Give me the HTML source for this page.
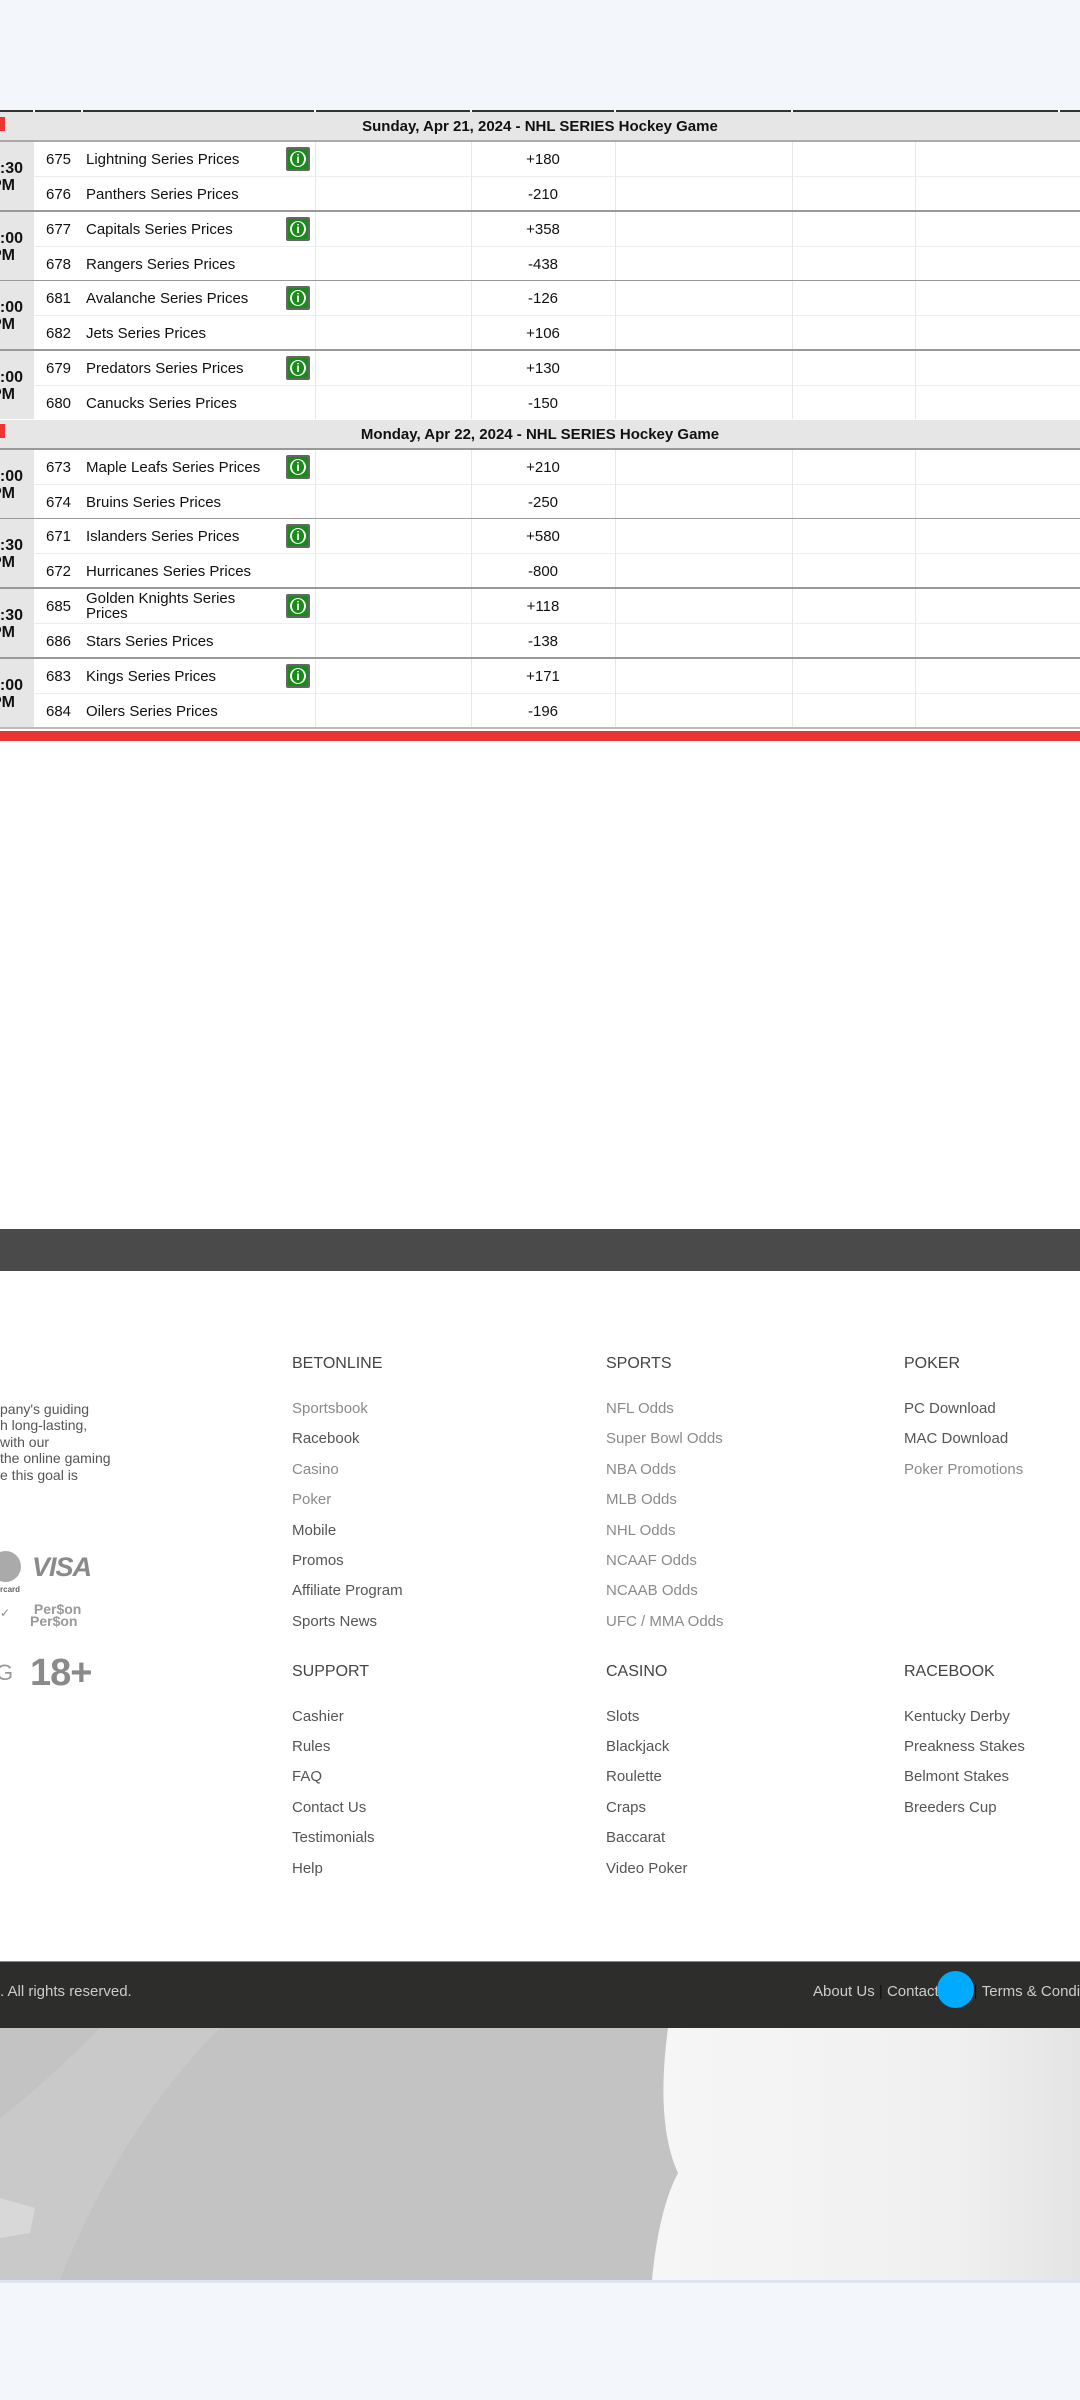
<!DOCTYPE html>
<html><head><meta charset="utf-8"><style>
*{margin:0;padding:0;box-sizing:border-box}
body{width:1080px;height:2400px;position:relative;overflow:hidden;background:#fff;font-family:"Liberation Sans",Arial,sans-serif;color:#111}
.a{position:absolute}
.hd{position:absolute;left:0;width:1080px;height:30px;background:#e6e6e6;border-bottom:2px solid #aaa;font-weight:bold;font-size:15px;text-align:center;line-height:29px}
.pl{position:absolute;left:0;width:5px;height:14px;background:#e33}
.g{position:absolute;left:0;width:1080px;height:70px;border-bottom:2px solid #999;background:#fff}
.t{position:absolute;left:0;top:0;width:34px;height:68px;background:#e6e6e6;overflow:hidden}
.t div{position:absolute;left:-9px;font-weight:bold;font-size:16px;line-height:16px;white-space:nowrap}
.r{position:absolute;left:34px;width:1046px;height:34px;font-size:15px;line-height:17px}
.r.b{border-top:1px solid #eee}
.r .n{position:absolute;left:12px;top:9px}
.r .m{position:absolute;left:52px;top:9px}
.r .o{position:absolute;left:437px;width:144px;top:9px;text-align:center}
.v{position:absolute;top:0;width:1px;height:68px;background:#e8e8e8}
.i{position:absolute;left:252px;top:5px;width:24px;height:24px;background:#666;border-radius:2px;padding:2px}
.i span{display:block;width:20px;height:20px;background:#1a8a1a;border-radius:2px;position:relative}
.i span:before{content:"";position:absolute;left:2px;top:2px;width:16px;height:16px;border-radius:50%;background:#fff}
.i span:after{content:"i";position:absolute;left:4px;top:3px;width:12px;height:14px;border-radius:50%;background:#1a8a1a;color:#fff;font-weight:bold;font-size:12px;line-height:14px;text-align:center}
.fh{position:absolute;font-size:16px;color:#444}
.fl{position:absolute;font-size:15px;color:#555;line-height:18px}
.fl.l{color:#8a8a8a}
.ft{position:absolute;left:0;font-size:14px;color:#555;line-height:16px;white-space:nowrap}
</style></head><body>
<div class="a" style="left:0;top:0;width:1080px;height:110px;background:#f3f7fc"></div>
<div class="a" style="top:110px;left:0;width:33px;height:2px;background:#333"></div>
<div class="a" style="top:110px;left:35px;width:46px;height:2px;background:#333"></div>
<div class="a" style="top:110px;left:83px;width:231px;height:2px;background:#333"></div>
<div class="a" style="top:110px;left:316px;width:154px;height:2px;background:#333"></div>
<div class="a" style="top:110px;left:472px;width:142px;height:2px;background:#333"></div>
<div class="a" style="top:110px;left:616px;width:175px;height:2px;background:#333"></div>
<div class="a" style="top:110px;left:793px;width:265px;height:2px;background:#333"></div>
<div class="a" style="top:110px;left:1060px;width:20px;height:2px;background:#333"></div>

<div class="hd" style="top:112px">Sunday, Apr 21, 2024 - NHL SERIES Hockey Game</div>
<div class="pl" style="top:117px"></div>

<div class="g" style="top:142px"><div class="t"><div style="top:19px">7:30</div><div style="top:36px">PM</div></div>
<div class="r" style="top:0"><span class="n">675</span><span class="m">Lightning Series Prices</span><span class="i"><span></span></span><span class="o">+180</span></div>
<div class="r b" style="top:34px"><span class="n">676</span><span class="m">Panthers Series Prices</span><span class="o">-210</span></div>
<div class="v" style="left:315px"></div><div class="v" style="left:471px"></div><div class="v" style="left:615px"></div><div class="v" style="left:792px"></div><div class="v" style="left:915px"></div></div>

<div class="g" style="top:212px"><div class="t"><div style="top:19px">6:00</div><div style="top:36px">PM</div></div>
<div class="r" style="top:0"><span class="n">677</span><span class="m">Capitals Series Prices</span><span class="i"><span></span></span><span class="o">+358</span></div>
<div class="r b" style="top:34px"><span class="n">678</span><span class="m">Rangers Series Prices</span><span class="o">-438</span></div>
<div class="v" style="left:315px"></div><div class="v" style="left:471px"></div><div class="v" style="left:615px"></div><div class="v" style="left:792px"></div><div class="v" style="left:915px"></div></div>

<div class="g" style="top:281px"><div class="t"><div style="top:19px">7:00</div><div style="top:36px">PM</div></div>
<div class="r" style="top:0"><span class="n">681</span><span class="m">Avalanche Series Prices</span><span class="i"><span></span></span><span class="o">-126</span></div>
<div class="r b" style="top:34px"><span class="n">682</span><span class="m">Jets Series Prices</span><span class="o">+106</span></div>
<div class="v" style="left:315px"></div><div class="v" style="left:471px"></div><div class="v" style="left:615px"></div><div class="v" style="left:792px"></div><div class="v" style="left:915px"></div></div>

<div class="g" style="top:351px;height:69px;border-bottom:none"><div class="t"><div style="top:19px">0:00</div><div style="top:36px">PM</div></div>
<div class="r" style="top:0"><span class="n">679</span><span class="m">Predators Series Prices</span><span class="i"><span></span></span><span class="o">+130</span></div>
<div class="r b" style="top:34px"><span class="n">680</span><span class="m">Canucks Series Prices</span><span class="o">-150</span></div>
<div class="v" style="left:315px"></div><div class="v" style="left:471px"></div><div class="v" style="left:615px"></div><div class="v" style="left:792px"></div><div class="v" style="left:915px"></div></div>

<div class="hd" style="top:420px;border-bottom:2px solid #999">Monday, Apr 22, 2024 - NHL SERIES Hockey Game</div>
<div class="pl" style="top:424px"></div>

<div class="g" style="top:450px"><div class="t"><div style="top:19px">7:00</div><div style="top:36px">PM</div></div>
<div class="r" style="top:0"><span class="n">673</span><span class="m">Maple Leafs Series Prices</span><span class="i"><span></span></span><span class="o">+210</span></div>
<div class="r b" style="top:34px"><span class="n">674</span><span class="m">Bruins Series Prices</span><span class="o">-250</span></div>
<div class="v" style="left:315px"></div><div class="v" style="left:471px"></div><div class="v" style="left:615px"></div><div class="v" style="left:792px"></div><div class="v" style="left:915px"></div></div>

<div class="g" style="top:519px"><div class="t"><div style="top:19px">7:30</div><div style="top:36px">PM</div></div>
<div class="r" style="top:0"><span class="n">671</span><span class="m">Islanders Series Prices</span><span class="i"><span></span></span><span class="o">+580</span></div>
<div class="r b" style="top:34px"><span class="n">672</span><span class="m">Hurricanes Series Prices</span><span class="o">-800</span></div>
<div class="v" style="left:315px"></div><div class="v" style="left:471px"></div><div class="v" style="left:615px"></div><div class="v" style="left:792px"></div><div class="v" style="left:915px"></div></div>

<div class="g" style="top:589px"><div class="t"><div style="top:19px">9:30</div><div style="top:36px">PM</div></div>
<div class="r" style="top:0"><span class="n">685</span><span class="m" style="top:2px;line-height:15px">Golden Knights Series<br>Prices</span><span class="i"><span></span></span><span class="o">+118</span></div>
<div class="r b" style="top:34px"><span class="n">686</span><span class="m">Stars Series Prices</span><span class="o">-138</span></div>
<div class="v" style="left:315px"></div><div class="v" style="left:471px"></div><div class="v" style="left:615px"></div><div class="v" style="left:792px"></div><div class="v" style="left:915px"></div></div>

<div class="g" style="top:659px;border-bottom:2px solid #bbb"><div class="t"><div style="top:19px">0:00</div><div style="top:36px">PM</div></div>
<div class="r" style="top:0"><span class="n">683</span><span class="m">Kings Series Prices</span><span class="i"><span></span></span><span class="o">+171</span></div>
<div class="r b" style="top:34px"><span class="n">684</span><span class="m">Oilers Series Prices</span><span class="o">-196</span></div>
<div class="v" style="left:315px"></div><div class="v" style="left:471px"></div><div class="v" style="left:615px"></div><div class="v" style="left:792px"></div><div class="v" style="left:915px"></div></div>

<div class="a" style="top:731px;left:0;width:1080px;height:10px;background:#e93434"></div>

<div class="a" style="top:1229px;left:0;width:1080px;height:42px;background:#4a4a4a"></div>

<div class="ft" style="top:1401px">pany's guiding</div>
<div class="ft" style="top:1417px">h long-lasting,</div>
<div class="ft" style="top:1434px">with our</div>
<div class="ft" style="top:1450px">the online gaming</div>
<div class="ft" style="top:1467px">e this goal is</div>
<div class="a" style="left:-10px;top:1551px;width:31px;height:31px;border-radius:50%;background:#aaa"></div>
<div class="a" style="left:0;top:1585px;font-size:8px;font-weight:bold;color:#666">rcard</div>
<div class="a" style="left:32px;top:1552px;font-size:27px;font-weight:bold;font-style:italic;color:#8a8a8a;letter-spacing:-1px">VISA</div>
<div class="a" style="left:30px;top:1603px;font-size:14px;line-height:12px;font-weight:bold;color:#999">&nbsp;Per$on<br>Per$on</div>
<div class="a" style="left:0;top:1606px;font-size:12px;color:#888">✓</div>
<div class="a" style="left:30px;top:1652px;font-size:38px;font-weight:bold;color:#8a8a8a;letter-spacing:-1px">18+</div>
<div class="a" style="left:-4px;top:1660px;font-size:22px;color:#999">G</div>

<div class="fh" style="left:292px;top:1355px">BETONLINE</div>
<div class="fl l" style="left:292px;top:1400px">Sportsbook</div>
<div class="fl" style="left:292px;top:1430px">Racebook</div>
<div class="fl l" style="left:292px;top:1461px">Casino</div>
<div class="fl l" style="left:292px;top:1491px">Poker</div>
<div class="fl" style="left:292px;top:1522px">Mobile</div>
<div class="fl" style="left:292px;top:1552px">Promos</div>
<div class="fl" style="left:292px;top:1582px">Affiliate Program</div>
<div class="fl" style="left:292px;top:1613px">Sports News</div>

<div class="fh" style="left:606px;top:1355px">SPORTS</div>
<div class="fl l" style="left:606px;top:1400px">NFL Odds</div>
<div class="fl l" style="left:606px;top:1430px">Super Bowl Odds</div>
<div class="fl l" style="left:606px;top:1461px">NBA Odds</div>
<div class="fl l" style="left:606px;top:1491px">MLB Odds</div>
<div class="fl l" style="left:606px;top:1522px">NHL Odds</div>
<div class="fl l" style="left:606px;top:1552px">NCAAF Odds</div>
<div class="fl l" style="left:606px;top:1582px">NCAAB Odds</div>
<div class="fl l" style="left:606px;top:1613px">UFC / MMA Odds</div>

<div class="fh" style="left:904px;top:1355px">POKER</div>
<div class="fl" style="left:904px;top:1400px">PC Download</div>
<div class="fl" style="left:904px;top:1430px">MAC Download</div>
<div class="fl l" style="left:904px;top:1461px">Poker Promotions</div>

<div class="fh" style="left:292px;top:1663px">SUPPORT</div>
<div class="fl" style="left:292px;top:1708px">Cashier</div>
<div class="fl" style="left:292px;top:1738px">Rules</div>
<div class="fl" style="left:292px;top:1768px">FAQ</div>
<div class="fl" style="left:292px;top:1799px">Contact Us</div>
<div class="fl" style="left:292px;top:1829px">Testimonials</div>
<div class="fl" style="left:292px;top:1860px">Help</div>

<div class="fh" style="left:606px;top:1663px">CASINO</div>
<div class="fl" style="left:606px;top:1708px">Slots</div>
<div class="fl" style="left:606px;top:1738px">Blackjack</div>
<div class="fl" style="left:606px;top:1768px">Roulette</div>
<div class="fl" style="left:606px;top:1799px">Craps</div>
<div class="fl" style="left:606px;top:1829px">Baccarat</div>
<div class="fl" style="left:606px;top:1860px">Video Poker</div>

<div class="fh" style="left:904px;top:1663px">RACEBOOK</div>
<div class="fl" style="left:904px;top:1708px">Kentucky Derby</div>
<div class="fl" style="left:904px;top:1738px">Preakness Stakes</div>
<div class="fl" style="left:904px;top:1768px">Belmont Stakes</div>
<div class="fl" style="left:904px;top:1799px">Breeders Cup</div>

<div class="a" style="top:1961px;left:0;width:1080px;height:67px;background:#2d2d2b;border-top:1px solid #888"></div>
<div class="a" style="top:1983px;left:0;font-size:15px;color:#ccc">. All rights reserved.</div>
<div class="a" style="top:1983px;left:813px;font-size:15px;color:#ccc;white-space:nowrap;word-spacing:0">About Us&nbsp;<span style="color:#111">|</span>&nbsp;Contact Us&nbsp;&nbsp;&nbsp;<span style="color:#111">|</span>&nbsp;Terms &amp; Conditions</div>
<div class="a" style="left:937px;top:1971px;width:37px;height:37px;border-radius:50%;background:#00aaff"></div>

<svg class="a" style="left:0;top:2028px" width="1080" height="252">
<defs><linearGradient id="gr" x1="0" x2="1"><stop offset="0" stop-color="#f6f6f6"/><stop offset="0.7" stop-color="#f0f0f0"/><stop offset="1" stop-color="#e4e4e4"/></linearGradient></defs>
<rect width="1080" height="252" fill="#c3c3c3"/>
<path d="M0 90 Q40 60 100 0 L220 0 Q120 100 60 252 L0 252 Z" fill="#c9c9c9"/>
<path d="M0 170 L35 180 L30 205 L0 210 Z" fill="#d8d8d8"/>
<path d="M668 0 C660 60 662 110 678 145 C662 175 655 220 652 252 L1080 252 L1080 0 Z" fill="url(#gr)"/>
</svg>
<div class="a" style="top:2280px;left:0;width:1080px;height:120px;background:#f3f7fc;border-top:3px solid #dfe5ee"></div>
</body></html>
